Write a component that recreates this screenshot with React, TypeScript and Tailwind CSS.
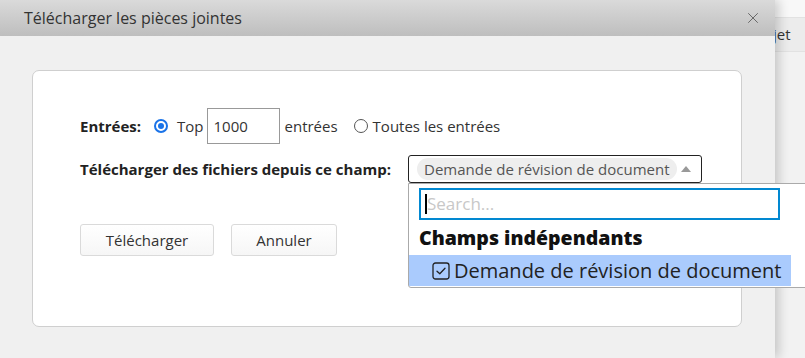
import { X } from "lucide-react";

function Radio({ checked }: { checked?: boolean }) {
	return (
		<span
			className={
				checked
					? "flex h-[14px] w-[14px] items-center justify-center rounded-full border-2 border-[#1a73e8] bg-white"
					: "flex h-[14px] w-[14px] items-center justify-center rounded-full border border-[#555] bg-white"
			}
		>
			{checked && <span className="h-[6px] w-[6px] rounded-full bg-[#1a73e8]" />}
		</span>
	);
}

function CheckedBox() {
	return (
		<svg width="18" height="18" viewBox="0 0 18 18" fill="none">
			<rect x="1" y="1" width="16" height="16" rx="2.5" stroke="#222" strokeWidth="1.3" />
			<path d="M5 9.2 L7.8 11.8 L13 6.3" stroke="#222" strokeWidth="1.3" strokeLinecap="round" strokeLinejoin="round" />
		</svg>
	);
}

export default function App() {
	return (
		<div className="relative flex h-[358px] w-[805px] overflow-hidden bg-[#f3f3f3] font-['Open_Sans',sans-serif] text-[#222]">
			{/* dialog */}
			<div className="relative z-10 flex w-[775px] flex-col shadow-[4px_0_10px_rgba(0,0,0,0.18)]">
				<div className="flex h-[36px] items-center justify-between bg-gradient-to-b from-[#dadada] to-[#bebebe] pl-[24px] pr-[13px]">
					<span className="text-[16px] text-[#333]">Télécharger les pièces jointes</span>
					<X className="h-[18px] w-[18px] text-[#666]" strokeWidth={1.3} />
				</div>
				<div className="flex-1 bg-[#f0f0f0] pl-[32px] pr-[33px] pt-[34px]">
					<div className="h-[257px] rounded-[7px] border border-[#cfcfcf] bg-white pl-[47px] pt-[37px]">
						<div className="flex h-[36px] items-center text-[15px] text-[#333]">
							<span className="font-bold text-[#222]">Entrées:</span>
							<span className="ml-[13px]">
								<Radio checked />
							</span>
							<span className="ml-[9px]">Top</span>
							<span className="ml-[3px] flex h-[36px] w-[73px] items-center border border-[#999] pl-[6px]">
								1000
							</span>
							<span className="ml-[5px]">entrées</span>
							<span className="ml-[16px]">
								<Radio />
							</span>
							<span className="ml-[5px]">Toutes les entrées</span>
						</div>
						<div className="mt-[11px] flex h-[28px] items-center">
							<span className="w-[328px] text-[15px] font-bold">Télécharger des fichiers depuis ce champ:</span>
							<div className="relative">
								<div className="flex h-[28px] w-[294px] items-center rounded-[3px] border border-[#222] pl-[8px] pr-[10px]">
									<span className="rounded-full bg-[#eeeeee] px-[7px] text-[15px] leading-[22px] text-[#555]">
										Demande de révision de document
									</span>
									<span className="ml-auto h-0 w-0 border-x-[5px] border-b-[6px] border-x-transparent border-b-[#999]" />
								</div>
								<div className="absolute left-0 top-[28px] z-20 w-[420px] rounded-b-[3px] border border-[#aaa] bg-white pb-[1px] pt-[4px]">
									<div className="mx-[10px] flex h-[32px] w-[361px] items-center border-2 border-[#0288d1] pl-[4px]">
										<span className="h-[20px] w-[2px] bg-black" />
										<span className="text-[17px] text-[#c8c8c8]">Search...</span>
									</div>
									<div className="flex h-[35px] items-center pl-[10px] text-[19.5px] font-extrabold text-[#111]">
										Champs indépendants
									</div>
									<div className="flex h-[31px] w-[382px] items-center bg-[#aacbfd] pl-[23px] text-[20px] text-[#222]">
										<CheckedBox />
										<span className="ml-[4px]">Demande de révision de document</span>
									</div>
								</div>
							</div>
						</div>
						<div className="mt-[41px] flex gap-[17px]">
							<button className="h-[32px] w-[134px] rounded-[3px] border border-[#dadada] bg-gradient-to-b from-white to-[#f6f6f6] text-[15px] text-[#333]">
								Télécharger
							</button>
							<button className="h-[32px] w-[106px] rounded-[3px] border border-[#dadada] bg-gradient-to-b from-white to-[#f6f6f6] text-[15px] text-[#333]">
								Annuler
							</button>
						</div>
					</div>
				</div>
			</div>
			{/* page behind */}
			<div className="flex flex-1 flex-col bg-[#f4f4f4]">
				<div className="h-[17px] bg-[#f8f8f8]" />
				<div className="flex h-[35px] items-center border-y border-[#e2e2e2] bg-[#ececec] text-[15px] text-[#333]">
					<span className="-ml-[2px]">jet</span>
				</div>
				<div className="flex-1 bg-[#f2f2f2]" />
			</div>
		</div>
	);
}
